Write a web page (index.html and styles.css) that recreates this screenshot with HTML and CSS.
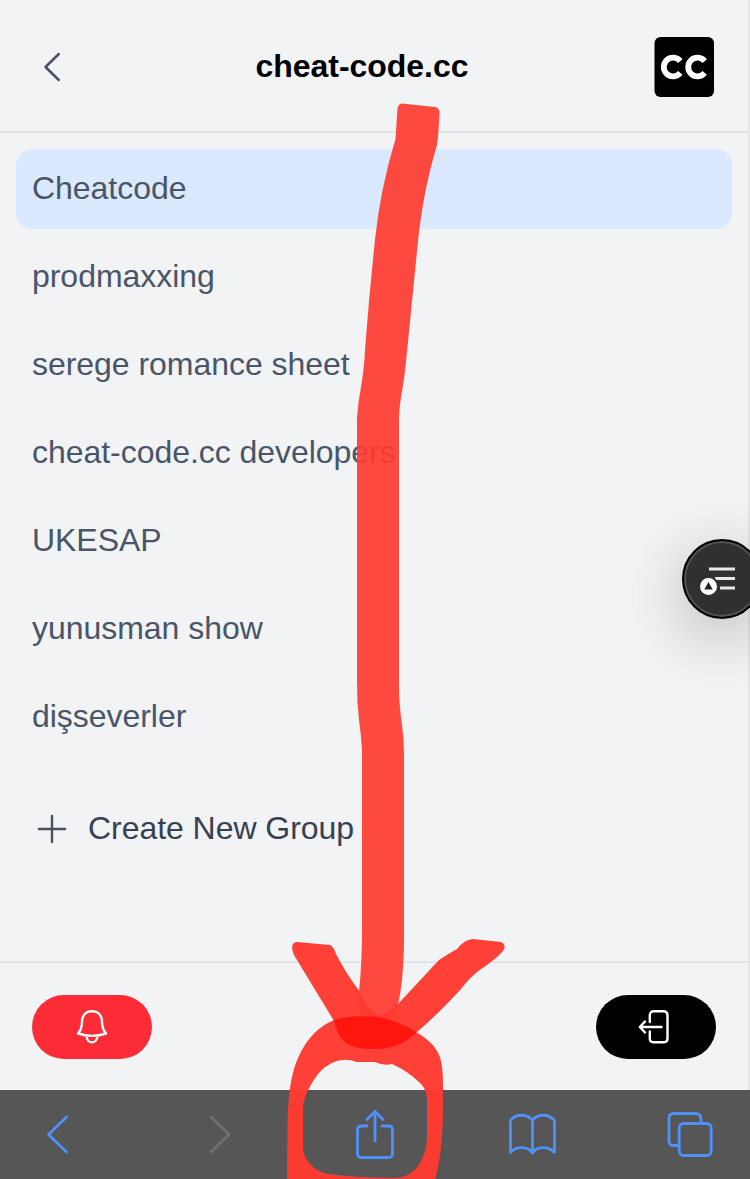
FILE: index.html
```html
<!DOCTYPE html>
<html lang="en">
<head>
<meta charset="utf-8">
<title>cheat-code.cc</title>
<link rel="stylesheet" href="styles.css">
</head>
<body>
<div class="screen">
  <div class="panel">
    <header class="header">
      <svg class="back" width="32" height="32" viewBox="0 0 32 32"><path d="M22.800 3L9.500 16L22.800 29"/></svg>
      <h1 class="title">cheat-code.cc</h1>
      <svg class="logo" width="60" height="60" viewBox="0 0 60 60">
        <rect x=".5" width="59.500" height="60" rx="6"/>
        <path d="M26.300 24.100A9.300 9.300 0 1 0 26.300 35.900M50.700 24.100A9.300 9.300 0 1 0 50.700 35.900"/>
      </svg>
    </header>
    <main class="content">
      <ul class="groups">
        <li class="group active">Cheatcode</li>
        <li class="group">prodmaxxing</li>
        <li class="group">serege romance sheet</li>
        <li class="group">cheat-code.cc developers</li>
        <li class="group">UKESAP</li>
        <li class="group">yunusman show</li>
        <li class="group">dişseverler</li>
      </ul>
      <div class="create">
        <svg width="40" height="40" viewBox="0 0 40 40"><path d="M20 7V33M7 20H33"/></svg>
        <span>Create New Group</span>
      </div>
    </main>
    <footer class="footer">
      <div class="pill alert">
        <svg width="36" height="36" viewBox="0 0 36 36"><path d="M4 24.500C7 21 8 18 8 13C8 6 12 2.200 18 2.200S28 6 28 13C28 18 29 21 32 24.500C23 27.500 13 27.500 4 24.500ZM12.600 27C12.800 35.500 23.200 35.500 23.400 27"/></svg>
      </div>
      <div class="pill leave">
        <svg width="36" height="36" viewBox="0 0 36 36"><path d="M11.800 13V6.500Q11.800 2.200 16.100 2.200H25.200Q29.500 2.200 29.500 6.500V29.500Q29.500 33.300 25.200 33.300H16.100Q11.800 33.300 11.800 29.500V22.500M23.500 18H2M7 12.500L1.800 18L7 23.500"/></svg>
      </div>
    </footer>
  </div>
  <nav class="toolbar">
    <svg width="48" height="48" viewBox="0 0 48 48"><path d="M33.500 7L15.500 24.500L33.500 42"/></svg>
    <svg class="disabled" width="48" height="48" viewBox="0 0 48 48"><path d="M20 7L38 24.500L20 42"/></svg>
    <svg width="48" height="52" viewBox="0 0 48 52"><path d="M17 18H11.500Q7.500 18 7.500 22V45.500Q7.500 49.500 11.500 49.500H38.500Q42.500 49.500 42.500 45.500V22Q42.500 18 38.500 18H32M25 33V3.500M17 11.500L25 3.500L33 11.500"/></svg>
    <svg width="48" height="48" viewBox="0 0 48 48"><path d="M24.500 10.500C20 4 8 3 2.500 10.500V42.500C8 36 20 36 24.500 43C29 36 40 36 46.500 42.500V10.500C40 3 29 4 24.500 10.500V43"/></svg>
    <svg width="48" height="48" viewBox="0 0 48 48"><rect x="13.200" y="13.500" width="32" height="32" rx="4.500"/><path d="M12 35.500H7.500Q3 35.500 3 31V8.500Q3 3.500 8 3.500H29.500Q35 3.500 35 9V13"/></svg>
  </nav>
  <div class="floating">
    <svg width="80" height="80" viewBox="0 0 80 80">
      <path class="rule" d="M27 30H53M33 39.500H53M38 49H53"/>
      <circle class="halo" cx="26.500" cy="47.500" r="9.500"/>
      <path class="mark" d="M26.500 43L22.300 50.500H30.700Z"/>
    </svg>
  </div>
  <svg class="marker" width="750" height="1179" viewBox="0 0 750 1179">
    <defs><clipPath id="ring"><path d="M287 1180L287.500 1125Q288 1080 298 1058Q311 1028 337 1019Q355 1015 377 1017Q397 1020 414 1031Q437 1043 441 1061Q443 1070 443 1085V1115Q442 1155 435 1180Z"/></clipPath></defs>
    <path class="shaft" d="M402 103.500L435 107Q440 108 439.500 114L438 137Q437.500 145 435 152C426 184 421 212 417.500 246L406 362Q405 374 402.500 388Q399 407 399 420V685Q399 704 402 725Q404 739 404 754V935Q404 978 398 1005L395 1016Q380 1023 360 1014L359 992Q362 963 362 930V750Q361 734 359 720Q357 702 357 684V418Q358 402 361 387Q364 370 365 350Q369 296 375 240Q380 190 395.500 139L397.500 109Q398 104 402 103.500Z"/>
    <path class="head" d="M297 942L330 945Q334 947 336 954Q345 972 360 992Q366 1009 379 1016Q390 1012 398 1004L439 960Q448 954 457 949Q465 939 473 939L501 942Q507 945 503 951Q495 960 481 969Q471 976 461 989Q437 1015 417 1032Q401 1048 378 1049Q353 1050 344 1041Q338 1036 334 1021L294 955Q289 943 297 942Z"/>
    <path class="ring" fill-rule="evenodd" d="M287 1180L287.500 1125Q288 1080 298 1058Q311 1028 337 1019Q355 1015 377 1017Q397 1020 414 1031Q437 1043 441 1061Q443 1070 443 1085V1115Q442 1155 435 1180ZM303 1107V1151Q309 1170 328 1174Q360 1178 395 1178Q416 1177 424 1154Q427 1147 427 1139V1100Q427 1089 420 1083Q408 1071 392 1064Q384 1066 375 1062H357Q335 1054 318 1074Q305 1091 303 1107Z"/>
    <path class="overlap" clip-path="url(#ring)" d="M330 1015H435L417 1032Q401 1048 378 1049Q353 1050 344 1041Q338 1036 334 1021Z"/>
  </svg>
</div>
</body>
</html>
```
FILE: styles.css
```css
* { box-sizing: border-box; }
body { margin: 0; font-family: "Liberation Sans", Arial, sans-serif; }
svg { display: block; flex: none; fill: none; stroke-linecap: round; stroke-linejoin: round; }
.screen { position: relative; width: 750px; height: 1179px; overflow: hidden; display: flex; flex-direction: column; background: #f1f3f5; }
.panel { height: 1090px; display: flex; flex-direction: column; border-right: 2px solid #e4e6ea; }
.header { height: 133px; display: flex; align-items: center; justify-content: space-between; padding: 3px 34px 0 36px; border-bottom: 2px solid #e2e4e8; }
.back { stroke: #4a5062; stroke-width: 2.5; }
.title { margin: 0; font-size: 32px; line-height: 40px; font-weight: 700; color: #000; padding: 0 0 2px 2px; letter-spacing: -.04px; }
.logo rect { fill: #000; }
.logo path { stroke: #fff; stroke-width: 5.8; stroke-linecap: butt; }
.content { flex: 1; padding: 16px; }
.groups { list-style: none; margin: 0; padding: 0; display: flex; flex-direction: column; gap: 8px; }
.group { height: 80px; padding: 0 16px; line-height: 78px; font-size: 32px; letter-spacing: -.04px; color: #4a5568; border-radius: 16px; white-space: nowrap; }
.active { background: #dbe9fe; }
.create { display: flex; align-items: center; gap: 16px; height: 80px; margin-top: 32px; padding-left: 16px; font-size: 32px; letter-spacing: -.05px; color: #374151; }
.create span { line-height: 40px; padding-bottom: 2px; }
.create svg { stroke: #4a5060; stroke-width: 2.4; }
.footer { height: 129px; border-top: 2px solid #e2e4e8; display: flex; align-items: center; justify-content: space-between; padding: 0 32px; }
.pill { width: 120px; height: 64px; border-radius: 32px; display: flex; align-items: center; justify-content: center; }
.pill svg { stroke: #fff; stroke-width: 2.4; }
.alert { background: #fb2c36; }
.leave { background: #000; }
.toolbar { height: 89px; background: #565656; display: flex; align-items: center; justify-content: space-between; padding: 0 36px 2px 33px; }
.toolbar svg { stroke: #4f91fb; stroke-width: 2.8; }
.toolbar .disabled { stroke: #707070; }
.floating { position: absolute; left: 682px; top: 539px; width: 80px; height: 80px; border: 2px solid #000; border-radius: 50%; background: #303030; box-shadow: inset 0 0 0 2px #535353, 0 16px 64px rgba(0,0,0,.26); }
.floating svg { margin: -2px; }
.rule { stroke: #e8e9e4; stroke-width: 3; stroke-linecap: butt; }
.halo { fill: #fff; stroke: #303030; stroke-width: 2; }
.mark { fill: #222; }
.marker { position: absolute; inset: 0; pointer-events: none; }
.marker > path { filter: blur(.6px); }
.shaft { fill: #ff3b30; fill-opacity: .92; }
.head { fill: #ff382e; fill-opacity: .96; }
.ring { fill: #ff3a30; fill-opacity: .97; }
.overlap { fill: #ff160f; }
```
